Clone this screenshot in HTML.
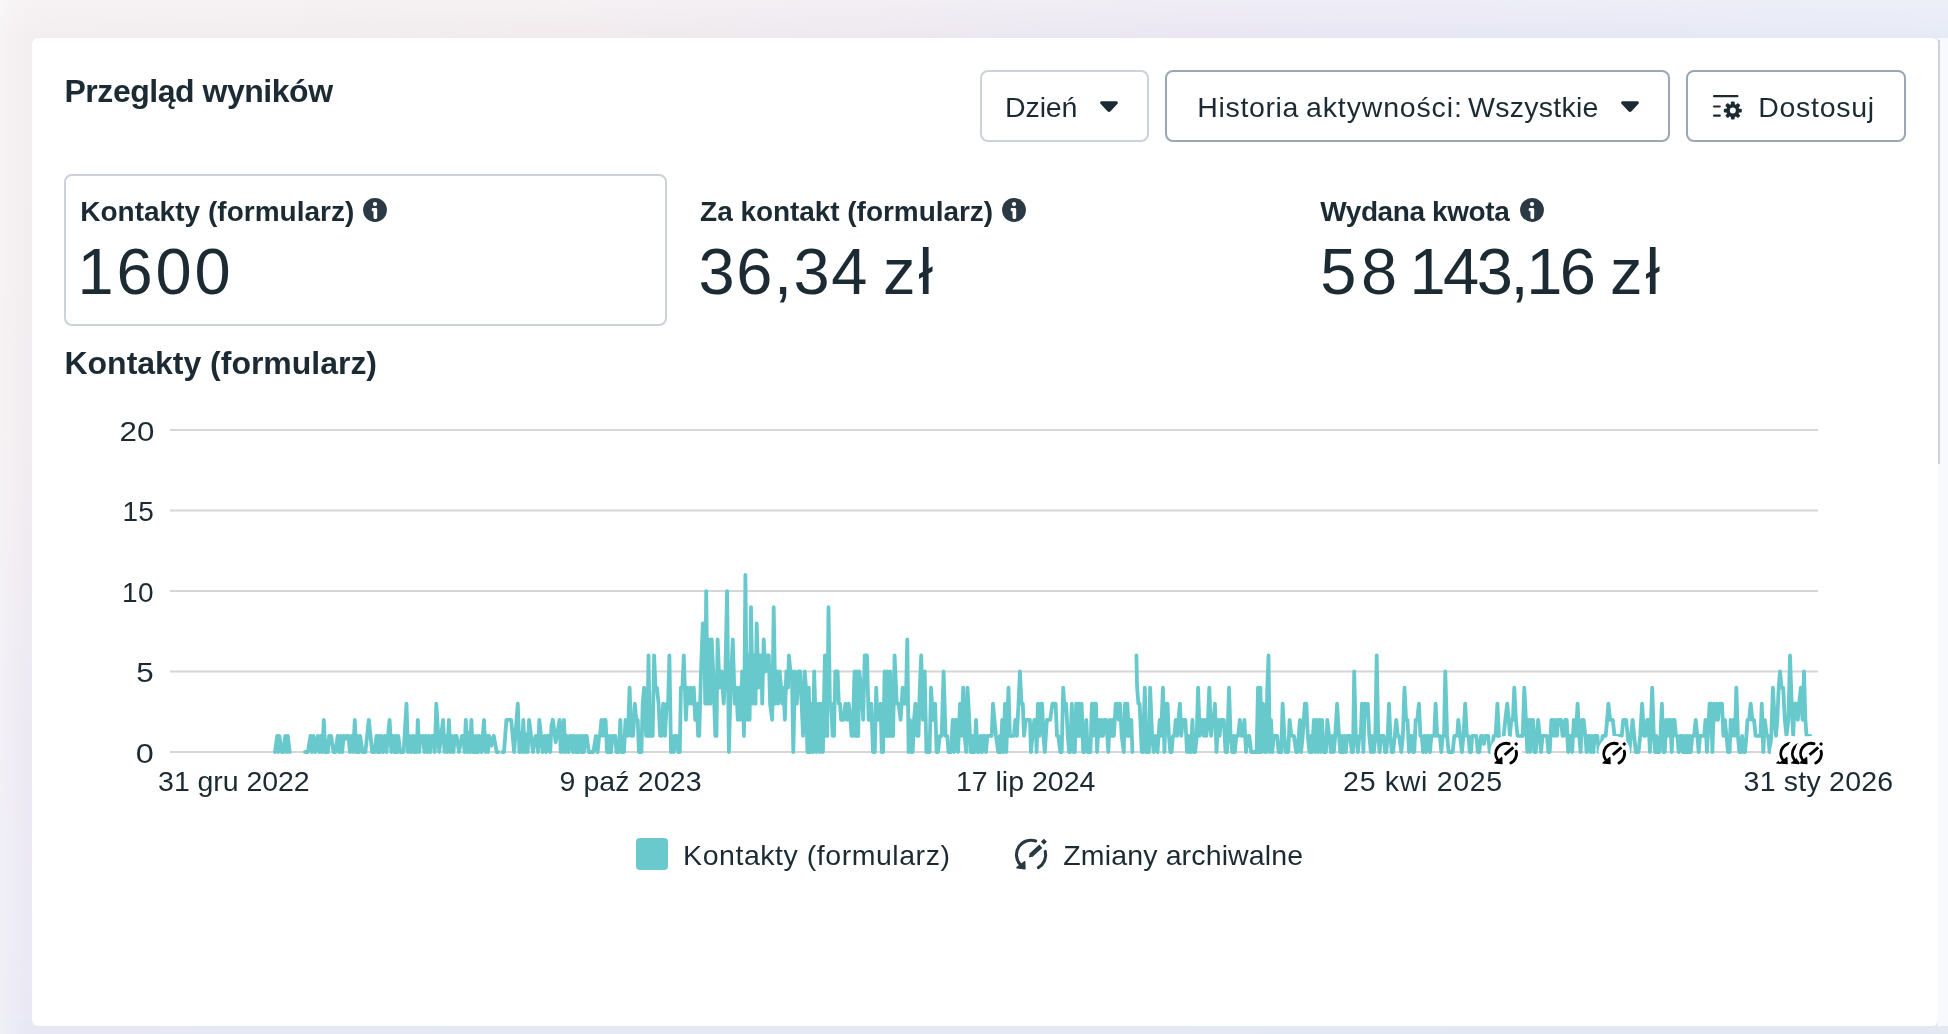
<!DOCTYPE html>
<html lang="pl">
<head>
<meta charset="utf-8">
<title>Przegląd wyników</title>
<style>
html,body{margin:0;padding:0;}
body{width:1948px;height:1034px;overflow:hidden;position:relative;
  font-family:"Liberation Sans",sans-serif;color:#1c2b33;background:#ece9f3;}
#bgtop{position:absolute;left:0;top:0;width:1948px;height:40px;
  background:linear-gradient(to bottom, rgba(255,255,255,0.28) 0, rgba(255,255,255,0) 38px),
    linear-gradient(to right, #f3eeef 0%, #f1ebee 30%, #ede8f0 48%, #e9e6f3 64%, #e7e7f5 82%, #e6eaf6 100%);}
#bgleft{position:absolute;left:0;top:38px;width:34px;height:996px;
  background:linear-gradient(to bottom, #f3eeef 0%, #f2edf0 40%, #ede9f3 68%, #e9e8f5 100%);}
#bgbot{position:absolute;left:0;top:1020px;width:1948px;height:14px;
  background:linear-gradient(to right, #e7e8f4 0%, #e5e9f3 30%, #e2e9f3 100%);}
#bgl2{position:absolute;left:0;top:0;width:30px;height:1034px;background:linear-gradient(to right, rgba(255,255,255,0.32) 0, rgba(255,255,255,0) 28px);}
.abs{position:absolute;white-space:nowrap;line-height:1;}
#card{position:absolute;left:32px;top:38px;width:1906px;height:988px;background:#fff;border-radius:6px;}
#rail{position:absolute;left:1938px;top:38px;width:10px;height:988px;background:#f8f9fd;}
#thumb{position:absolute;left:1938px;top:40px;width:2px;height:424px;background:#ced1dd;}
.btn{position:absolute;box-sizing:border-box;border:2px solid #cbd2d9;border-radius:8px;background:#fff;}
.b{font-weight:bold;}
#wrap{position:absolute;left:0;top:0;width:1948px;height:1034px;will-change:transform;}
</style>
</head>
<body>
<div id="wrap">
<div id="bgtop"></div><div id="bgleft"></div><div id="bgbot"></div><div id="bgl2"></div>
<div id="card"></div>
<div id="rail"></div><div id="thumb"></div>

<div class="abs b" style="left:64.5px;top:75px;font-size:32px;letter-spacing:-0.47px;">Przegląd wyników</div>

<div class="btn" style="left:980px;top:70px;width:169px;height:72px;"></div>
<div class="abs" style="left:1005.0px;top:93px;font-size:28.5px;letter-spacing:-0.1px;">Dzień</div>
<svg class="abs" style="left:1099px;top:100px;" width="20" height="14" viewBox="0 0 20 14"><path d="M2.6 1.2h14.8c1.3 0 2 1.5 1.1 2.5l-7 7.6c-.8.9-2.2.9-3 0l-7-7.6c-.9-1-.2-2.500 1.100-2.500z" fill="#1c2b33"/></svg>

<div class="btn" style="left:1165px;top:70px;width:505px;height:72px;border-color:#9aa7b5;"></div>
<div class="abs" style="left:0;top:93px;font-size:28.5px;"><span class="abs" style="left:1197.3px;top:0;letter-spacing:0.65px;">Historia</span> <span class="abs" style="left:1306.1px;top:0;letter-spacing:0.84px;">aktywności:</span> <span class="abs" style="left:1468.0px;top:0;letter-spacing:0.27px;">Wszystkie</span></div>
<svg class="abs" style="left:1620px;top:100px;" width="20" height="14" viewBox="0 0 20 14"><path d="M2.6 1.2h14.8c1.3 0 2 1.5 1.1 2.5l-7 7.6c-.8.9-2.2.9-3 0l-7-7.6c-.9-1-.2-2.500 1.100-2.500z" fill="#1c2b33"/></svg>

<div class="btn" style="left:1686px;top:70px;width:220px;height:72px;border-color:#9aa7b5;"></div>
<svg class="abs" style="left:1710px;top:92px;" width="36" height="36" viewBox="0 0 36 36">
<g fill="#1c2b33">
<rect x="3" y="3" width="25.500" height="2.200" rx="1"/>
<rect x="3" y="13.400" width="7.800" height="2.200" rx="1"/>
<rect x="3" y="22.600" width="7.800" height="2.200" rx="1"/>
</g>
<g transform="translate(22.800 18.600)">
<g fill="#1c2b33">
<rect x="-1.900" y="-9" width="3.800" height="18" rx="1"/>
<rect x="-1.900" y="-9" width="3.800" height="18" rx="1" transform="rotate(45)"/>
<rect x="-1.900" y="-9" width="3.800" height="18" rx="1" transform="rotate(90)"/>
<rect x="-1.900" y="-9" width="3.800" height="18" rx="1" transform="rotate(135)"/>
<circle r="6.600"/>
</g>
<circle r="3" fill="#fff"/>
</g>
</svg>
<div class="abs" style="left:1758.2px;top:93px;font-size:28.5px;letter-spacing:0.72px;">Dostosuj</div>

<div class="btn" style="left:64px;top:174px;width:603px;height:152px;"></div>
<div class="abs b" style="left:80.2px;top:198px;font-size:28px;letter-spacing:0.02px;">Kontakty (formularz)</div>
<svg class="abs" style="left:363.1px;top:198.1px;" width="24" height="24" viewBox="0 0 24 24"><circle cx="12" cy="12" r="11.900" fill="#2a3944"/><circle cx="12" cy="6.100" r="2.150" fill="#fff"/><rect x="10.500" y="10.100" width="3.700" height="10.800" rx="1.300" fill="#fff"/><rect x="8.700" y="10.100" width="4" height="3.100" rx="1.200" fill="#fff"/></svg>
<div class="abs" style="left:77.6px;top:239px;font-size:65px;letter-spacing:2.8px;">1600</div>
<div class="abs b" style="left:700.1px;top:198px;font-size:28px;letter-spacing:-0.05px;">Za kontakt (formularz)</div>
<svg class="abs" style="left:1002px;top:198px;" width="24" height="24" viewBox="0 0 24 24"><circle cx="12" cy="12" r="11.900" fill="#2a3944"/><circle cx="12" cy="6.100" r="2.150" fill="#fff"/><rect x="10.500" y="10.100" width="3.700" height="10.800" rx="1.300" fill="#fff"/><rect x="8.700" y="10.100" width="4" height="3.100" rx="1.200" fill="#fff"/></svg>
<div class="abs" style="left:0;top:239px;font-size:65px;"><span class="abs" style="left:698.5px;top:0;letter-spacing:1.56px;">36,34</span> <span class="abs" style="left:882.9px;top:0;letter-spacing:3.2px;">zł</span></div>
<div class="abs b" style="left:1320.2px;top:198px;font-size:28px;letter-spacing:-0.4px;">Wydana kwota</div>
<svg class="abs" style="left:1519.8px;top:198px;" width="24" height="24" viewBox="0 0 24 24"><circle cx="12" cy="12" r="11.900" fill="#2a3944"/><circle cx="12" cy="6.100" r="2.150" fill="#fff"/><rect x="10.500" y="10.100" width="3.700" height="10.800" rx="1.300" fill="#fff"/><rect x="8.700" y="10.100" width="4" height="3.100" rx="1.200" fill="#fff"/></svg>
<div class="abs" style="left:0;top:239px;font-size:65px;"><span class="abs" style="left:1320.3px;top:0;letter-spacing:4.6px;">58</span> <span class="abs" style="left:1409.4px;top:0;letter-spacing:-2.44px;">143,16</span> <span class="abs" style="left:1610.1px;top:0;letter-spacing:2.8px;">zł</span></div>

<div class="abs b" style="left:64.5px;top:347px;font-size:32px;letter-spacing:-0.02px;">Kontakty (formularz)</div>

<svg id="chart" class="abs" style="left:0;top:400px;" width="1948" height="380" viewBox="0 400 1948 380">
<g stroke="#d6d6d6" stroke-width="2">
<line x1="170" x2="1818" y1="430" y2="430"/>
<line x1="170" x2="1818" y1="510.500" y2="510.500"/>
<line x1="170" x2="1818" y1="591" y2="591"/>
<line x1="170" x2="1818" y1="671.400" y2="671.400"/>
<line x1="170" x2="1818" y1="752" y2="752"/>
</g>
<g fill="none" stroke="#68c9cc" stroke-width="3.8" stroke-linejoin="round" stroke-linecap="round">
<path d="M275 752 L277.2 735.9 L278.3 752 L279.3 735.9 L281.8 752 L283.2 752 L285.3 735.9 L286.5 752 L287.8 735.9 L289.7 752"/>
<path d="M305 752 L307.9 752 L310.5 735.9 L311.9 752 L313.4 735.9 L315.3 752 L317.8 735.9 L319.4 752 L320.9 735.9 L322.4 752 L323.8 719.8 L325.3 752 L326.7 740.7 L327.9 752 L329.1 735.9 L331.1 735.9 L333.5 752 L335.4 752 L337.7 735.9 L339.2 752 L340.7 735.9 L342.2 752 L343.7 735.9 L345.1 739.1 L346.6 735.9 L348.5 735.9 L349.9 752 L351.9 735.9 L353.3 752 L354.8 719.8 L356.2 752 L357.7 735.9 L358.9 752 L360.1 735.9 L362.5 752 L365.4 752 L368.8 719.8 L372.2 752 L374.6 752 L376.5 735.9 L377.7 752 L379 735.9 L380.1 752 L381.4 735.9 L383.1 752 L384.8 735.9 L386.5 752 L389.6 719.8 L391.3 752 L393 735.9 L394.3 752 L395.6 735.9 L397 752 L398.3 735.9 L400.2 752 L403.6 752 L406.5 703.7 L408 752 L409.4 735.9 L411 752 L412.6 735.9 L414.1 752 L415.7 735.9 L416.8 752 L417.8 719.8 L419.2 752 L420.5 735.9 L421.5 739.1 L423 735.9 L424.4 752 L425.9 735.9 L427.3 752 L428.8 735.9 L430.2 752 L431.7 735.9 L433.1 735.9 L433.4 735.9 L434.8 752 L436.3 703.7 L439.2 752 L443.1 719.8 L444.5 752 L446 735.9 L447.4 752 L448.9 719.8 L450.3 752 L451.8 735.9 L453.4 752 L455 735.9 L456.6 735.9 L459 752 L461.9 735.9 L463.4 735.9 L464.6 752 L465.8 719.8 L467.2 752 L468.7 732.7 L470 752 L471.4 719.8 L472.7 752 L474 735.9 L475.3 752 L476.7 735.9 L478 752 L479.3 735.9 L481.5 752 L484 719.8 L485.5 752 L487.1 735.9 L488.1 752 L489.2 735.9 L491.4 745.6 L493.8 735.9 L496.7 752 L498.2 752"/>
<path d="M502.5 752 L504 752 L506.4 719.8 L511.2 719.8 L514.1 752 L517.8 703.7 L519.4 752 L520.9 732.7 L522.1 752 L523.3 719.8 L524.8 752 L526.2 734.3 L527.7 752 L529.1 719.8 L533 752 L535.6 735.9 L536.9 735.9 L538.1 752 L539.3 719.8 L542.7 752 L544.6 735.9 L546.1 752 L547.5 735.9 L549 735.9 L550.2 752 L551.5 725.2 L552.8 719.8 L555.7 742.3 L559.6 719.8 L560.7 752 L561.8 723 L562.9 752 L563.9 719.8 L565.4 752 L566.8 735.9 L568.5 752 L570.1 735.9 L571.7 735.9 L572.9 752 L574.3 735.9 L575.7 752 L577 735.9 L578.4 752 L579.8 735.9 L581.2 752 L582.5 735.9 L583.9 752 L585.3 735.9 L586.7 735.9 L588.8 752 L593.4 752 L595.9 735.9 L597.6 752 L599.2 735.9 L600 735.9 L601.4 719.8 L602.8 735.9 L604.2 719.8 L605.6 719.8 L607 752 L608.4 752 L609.7 735.9 L611.1 752 L612.5 735.9 L613.9 735.9 L615.3 735.9 L616.5 752 L617.6 752 L619 752 L620.3 719.8 L621.5 752 L622.6 752 L624 752 L625.5 719.8 L626.7 735.9 L627.9 735.9 L629.6 687.6 L631.3 735.9 L633.1 735.9 L634.8 703.7 L636.3 719.8 L637.7 719.8 L638.9 752 L640 752 L641.4 752 L642.7 703.7 L644.1 687.6 L646.1 735.9 L647.3 735.9 L648.5 655.5 L649.9 735.9 L651.3 735.9 L652.7 735.9 L654.1 655.5 L655.5 687.6 L656.9 687.6 L658.6 703.7 L660.1 735.9 L661.5 735.9 L663.2 703.7 L665 735.9 L666.7 703.7 L668.1 703.7 L669.4 655.5 L671 752 L672.5 735.9 L673.9 752 L675.4 735.9 L676.8 735.9 L678.3 752 L679.8 752 L680.9 687.6 L682.4 687.6 L683.8 655.5 L685.9 719.8 L687.3 687.6 L688.9 703.7 L690.5 687.6 L692.1 703.7 L693.8 687.6 L695.2 719.8 L696.9 703.7 L698.1 735.9 L699.2 735.9 L701 671.5 L702.8 623.3 L704.2 623.3 L705.2 703.7 L706.2 591.1 L707.6 703.7 L709.1 639.4 L710.4 703.7 L711.7 639.4 L713.2 671.5 L715.3 735.9 L716.5 735.9 L717.6 639.4 L719.6 687.6 L721.6 671.5 L723.7 703.7 L725.4 671.5 L727.1 591.1 L728.9 752 L730.6 687.6 L732.8 639.4 L734.7 703.7 L736.4 687.6 L737.8 719.8 L739.3 687.6 L740.7 719.8 L742.2 671.5 L744 735.9 L745.4 575 L746.9 719.8 L748.3 655.5 L749.6 719.8 L751 607.2 L752.7 703.7 L754.1 655.5 L755.5 703.7 L756.7 623.3 L758.5 687.6 L760 655.5 L761.5 655.5 L762.2 703.7 L763.7 639.4 L765.4 671.5 L766.9 655.5 L768.8 655.5 L770.1 703.7 L772.2 719.8 L773.7 607.2 L775.3 703.7 L776.8 671.5 L778.2 703.7 L779.6 671.5 L781.1 687.6 L782.3 703.7 L783.4 687.6 L784.9 719.8 L786.3 671.5 L788.1 687.6 L788.9 655.5 L790.4 671.5 L791.9 671.5 L793.3 752 L795 671.5 L796.8 703.7 L798.5 671.5 L800.2 671.5 L801.6 703.7 L803.1 735.9 L804.7 671.5 L806 687.6 L807.4 752 L808.8 687.6 L810.2 752 L811.6 703.7 L813 752 L814.2 671.5 L816.4 752 L818.5 703.7 L819.9 752 L821.4 703.7 L822.9 752 L824.9 655.5 L826 735.9 L827.2 735.9 L828.5 607.2 L829.9 703.7 L831.2 703.7 L832.6 735.9 L834 735.9 L835.3 671.5 L837.6 671.5 L838.8 703.7 L840 703.7 L841.1 719.8 L843.4 719.8 L845.4 703.7 L846.9 719.8 L848.7 703.7 L850.4 719.8 L851.6 735.9 L852.7 735.9 L854.5 671.5 L855.6 735.9 L857 671.5 L858.2 735.9 L859.3 671.5 L861.2 687.6 L863.2 719.8 L864.7 655.5 L867 655.5 L868.6 719.8 L869.9 719.8 L871.3 703.7 L873 752 L874.8 752 L876.2 687.6 L877.4 719.8 L878.6 719.8 L880.6 703.7 L881.8 752 L883.1 752 L884.6 671.5 L886 735.9 L887.4 671.5 L888.8 735.9 L890.2 671.5 L891.6 735.9 L893.1 735.9 L894.6 655.5 L896.8 703.7 L898.6 703.7 L900.6 719.8 L902.6 687.6 L904.4 703.7 L905.8 703.7 L907.3 639.4 L908.6 752 L910 719.8 L911.3 752 L912.7 752 L914 719.8 L915.4 703.7 L917.1 735.9 L918.5 735.9 L919.8 687.6 L921.2 655.5 L922.9 719.8 L924.7 671.5 L926.4 752 L928.1 752 L929.6 752 L931 687.6 L933.1 719.8 L935.1 703.7 L936.6 752 L938 752 L939.8 735.9 L941.7 735.9 L943.6 671.5 L945.6 735.9 L947.3 735.9 L948.5 752 L949.6 752 L951.2 752 L952.7 719.8 L954.1 752 L955.4 719.8 L956.7 719.8 L958.1 752 L960 703.7 L961.4 735.9 L963.2 687.6 L964.6 735.9 L966.2 752 L967.5 687.6 L969.3 719.8 L970.6 752 L972.2 735.9 L973.3 752 L974.7 752 L976 719.8 L977.6 752 L979 752 L980.5 735.9 L982 752 L983.4 735.9 L984.7 735.9 L986 752 L987.4 735.9 L988.8 735.9 L990.1 735.9 L991.7 735.9 L993 703.7 L994.4 719.8 L996 735.9 L998.2 752 L999.8 735.9 L1000.9 752 L1002.2 719.8 L1003.6 752 L1005 703.7 L1006.3 752 L1008.5 687.6 L1009.9 735.9 L1011.2 735.9 L1012.3 735.9 L1013.9 735.9 L1015.3 719.8 L1016.9 735.9 L1018.5 703.7 L1019.9 671.5 L1021.5 703.7 L1022.8 703.7 L1024 735.9 L1025.8 719.8 L1027.1 719.8 L1028.5 719.8 L1029.9 719.8 L1031 752 L1032.5 735.9 L1034.3 719.8 L1035.6 719.8 L1036.6 752 L1037.9 703.7 L1039.4 735.9 L1040.8 703.7 L1042.1 703.7 L1043.4 735.9 L1044.8 752 L1046.9 719.8 L1048.6 719.8 L1050.2 719.8 L1052.4 703.7 L1054 703.7 L1055.6 703.7 L1057 735.9 L1058.3 735.9 L1060.3 752 L1061.7 752 L1063.2 687.6 L1064.6 710.2 L1066.1 703.7 L1067.8 735.9 L1069.1 752 L1070.2 752 L1071.8 703.7 L1073.5 752 L1074.8 752 L1076.2 703.7 L1077.6 735.9 L1078.9 703.7 L1080.2 735.9 L1081.6 703.7 L1083.2 752 L1084.5 752 L1086.3 719.8 L1087.6 752 L1089 752 L1090.4 752 L1091.9 703.7 L1093.2 735.9 L1094.6 703.7 L1096 703.7 L1097.1 752 L1098.9 719.8 L1100.3 735.9 L1101.6 719.8 L1103 735.9 L1104.4 719.8 L1106 719.8 L1107.3 735.9 L1108.3 752 L1109.8 719.8 L1111.2 735.9 L1112.5 719.8 L1113.9 735.9 L1115.7 703.7 L1117.3 703.7 L1118.7 719.8 L1120 703.7 L1121.7 735.9 L1123.8 752 L1125 703.7 L1126.3 735.9 L1127.4 703.7 L1128.8 735.9 L1129.9 719.8 L1131.3 719.8 L1132.4 752"/>
<path d="M1136.4 655.5 L1137.1 687.6 L1138.4 703.7 L1139.6 703.7 L1141.8 752 L1142.9 752 L1144.8 687.6 L1146.3 752 L1147.7 752 L1148.9 752 L1150.1 687.6 L1152.1 735.9 L1153.7 752 L1155.3 735.9 L1157.5 752 L1159.7 719.8 L1161.1 735.9 L1162.9 687.6 L1164.4 752 L1165.9 703.7 L1167.5 703.7 L1168.9 735.9 L1170.3 752 L1171.6 752 L1172.9 735.9 L1174.3 735.9 L1175.7 719.8 L1177.2 735.9 L1178.4 719.8 L1179.9 703.7 L1181.3 735.9 L1182.7 719.8 L1184.1 719.8 L1185.4 719.8 L1187 752 L1188.4 735.9 L1189.8 752 L1191.1 752 L1192.4 719.8 L1193.8 752 L1195.2 752 L1196.7 735.9 L1198.1 687.6 L1199.7 735.9 L1201.1 719.8 L1202.5 719.8 L1203.8 735.9 L1205.1 719.8 L1206.4 735.9 L1208 719.8 L1209.3 687.6 L1211.1 735.9 L1212.5 719.8 L1213.7 719.8 L1214.9 703.7 L1216.5 752 L1218.1 719.8 L1219.6 735.9 L1221 719.8 L1222.5 719.8 L1223.8 719.8 L1225.5 752 L1227 752 L1229 687.6 L1230.6 735.9 L1232.2 752 L1233.6 735.9 L1234.9 752 L1236.3 735.9 L1238.2 735.9 L1239.8 719.8 L1241.4 735.9 L1242.8 735.9 L1244.4 719.8 L1246 752 L1247.9 735.9 L1249.3 735.9 L1251.2 752 L1256.6 752 L1258 687.6 L1259.2 752 L1260.4 687.6 L1261.7 752 L1263.1 703.7 L1264.9 752 L1266.1 752 L1267.3 687.6 L1268.5 655.5 L1269.8 752 L1271 719.8 L1272.3 752 L1273.9 735.9 L1275.5 735.9 L1277.2 735.9 L1278.6 752 L1280.1 752 L1281.3 752 L1282.6 703.7 L1284.4 735.9 L1285.7 752 L1286.9 752 L1288.3 752 L1289.6 719.8 L1291.3 735.9 L1292.7 735.9 L1294 735.9 L1296.1 752 L1297.4 752 L1298.7 735.9 L1300 719.8 L1301.1 752 L1302.7 735.9 L1304.9 703.7 L1306.3 703.7 L1307.8 735.9 L1309.5 752 L1310.8 735.9 L1312.1 752 L1313.9 719.8 L1315.2 752 L1316.5 719.8 L1317.9 752 L1319.2 719.8 L1320.6 752 L1322 719.8 L1323.4 752 L1324.5 752 L1325.9 752 L1327.3 719.8 L1329.2 735.9 L1330.9 752 L1332.3 735.9 L1333.8 752 L1335.2 735.9 L1337.1 703.7 L1339 735.9 L1340.3 752 L1341.7 735.9 L1343 752 L1344.4 735.9 L1345.8 752 L1347.2 735.9 L1348.7 735.9 L1350.1 735.9 L1351.8 752 L1353 752 L1354.2 671.5 L1355.8 735.9 L1357.9 752 L1359.4 735.9 L1360.7 735.9 L1362 703.7 L1363.4 752 L1364.8 703.7 L1366.1 706.9 L1367.7 703.7 L1369.3 735.9 L1370.9 752 L1372.3 735.9 L1373.9 752 L1375.3 735.9 L1376.7 655.5 L1378.2 735.9 L1379.6 752 L1381 735.9 L1382.3 735.9 L1383.7 735.9 L1385 752 L1386.3 752 L1387.7 735.9 L1389 703.7 L1390.4 735.9 L1391.8 752 L1393.1 752 L1394.8 735.9 L1396.2 719.8 L1397.8 735.9 L1399.1 735.9 L1401.3 752 L1402.9 735.9 L1404.5 687.6 L1406.1 719.8 L1407.5 719.8 L1409 752 L1410.5 735.9 L1411.9 735.9 L1413.1 752 L1414.3 752 L1415.7 719.8 L1417.3 719.8 L1418.9 703.7 L1420.4 735.9 L1421.8 735.9 L1423.1 752 L1424.6 735.9 L1426 752 L1427.3 735.9 L1428.7 735.9 L1430 752 L1431.4 735.9 L1432.8 735.9 L1434.3 735.9 L1435.6 703.7 L1437.1 735.9 L1438.6 735.9 L1439.9 735.9 L1441.3 752 L1442.7 735.9 L1444 735.9 L1445.3 671.5 L1447.1 735.9 L1448.6 752 L1450 752 L1452.7 752 L1454.3 735.9 L1456 735.9 L1457.2 735.9 L1458.3 719.8 L1460 735.9 L1461.9 752 L1463.5 735.9 L1465.2 703.7 L1466.8 735.9 L1468.4 735.9 L1469.8 752 L1471 752 L1472.2 735.9 L1474.4 735.9 L1475 735.9 L1476.3 735.9 L1477.9 752 L1479.3 752 L1481 735.9 L1482.4 735.9 L1483.9 744 L1485.3 735.9 L1486.7 735.9 L1488.2 735.9 L1489.7 752 L1492.3 752 L1493.6 735.9 L1495.6 735.9 L1497.4 703.7 L1499 735.9 L1500.5 752 L1502.1 752 L1503.7 735.9 L1505.3 719.8 L1507.2 703.7 L1508.8 719.8 L1509.9 735.9 L1511.3 719.8 L1512.9 719.8 L1514.3 687.6 L1515.9 719.8 L1517.5 735.9 L1518.9 735.9 L1520.5 735.9 L1522.7 735.9 L1524.3 687.6 L1525.9 719.8 L1527.3 752 L1528.8 719.8 L1530.2 752 L1531.6 719.8 L1533.1 719.8 L1534.4 752 L1535.7 752 L1537 735.9 L1538.1 719.8 L1539.7 735.9 L1541.1 752 L1542.5 735.9 L1545.4 735.9 L1547 735.9 L1548.4 752 L1549.7 752 L1551.4 719.8 L1552.8 719.8 L1554.1 735.9 L1555.5 719.8 L1556.9 735.9 L1558.2 719.8 L1559.7 719.8 L1561.1 719.8 L1562.5 735.9 L1563.8 735.9 L1565.2 719.8 L1566.7 719.8 L1568.1 752 L1569.4 735.9 L1570.9 735.9 L1572.2 752 L1573.8 719.8 L1575.7 735.9 L1577.6 703.7 L1579.2 735.9 L1580.6 752 L1582 719.8 L1583.6 719.8 L1585.3 735.9 L1586.6 752 L1587.9 735.9 L1589.3 735.9 L1590.6 752 L1592 735.9 L1593.4 752 L1594.7 735.9 L1596.1 735.9 L1597.4 735.9 L1598.8 752 L1600.6 752 L1602.6 735.9 L1604.4 735.9 L1605.7 735.9 L1607.1 719.8 L1608.4 703.7 L1610.1 719.8 L1611.5 719.8 L1612.8 719.8 L1614.5 735.9 L1615.8 735.9 L1617.4 735.9 L1619 735.9 L1620.5 735.9 L1621.8 735.9 L1623.2 719.8 L1624.7 719.8 L1626.1 719.8 L1627.7 735.9 L1629.3 752 L1631 735.9 L1632.6 719.8 L1634.2 735.9 L1635.8 752 L1638.5 752 L1640.2 735.9 L1642.1 703.7 L1644 735.9 L1645.6 735.9 L1647.2 719.8 L1648.6 719.8 L1649.9 752 L1652.2 687.6 L1653.8 735.9 L1655.2 752 L1656.5 735.9 L1657.8 752 L1659.2 752 L1660.5 735.9 L1661.9 703.7 L1663.5 752 L1664.8 752 L1666.2 719.8 L1667.7 735.9 L1669.1 719.8 L1670.4 719.8 L1671.7 752 L1673.1 719.8 L1674.5 719.8 L1676 735.9 L1677.3 735.9 L1678.7 752 L1680.1 735.9 L1681.4 735.9 L1682.8 752 L1684.1 735.9 L1685.5 752 L1686.8 735.9 L1688.2 752 L1689.6 735.9 L1690.9 752 L1692.2 735.9 L1694.1 735.9 L1695.7 719.8 L1697.3 735.9 L1698.7 752 L1700 735.9 L1701.4 735.9 L1702.9 735.9 L1704.2 735.9 L1705.5 719.8 L1706.9 752 L1708.3 727.9 L1709.6 703.7 L1711 703.7 L1712.4 752 L1713.8 703.7 L1715.2 719.8 L1716.6 703.7 L1718 719.8 L1719.3 703.7 L1720.7 703.7 L1722 703.7 L1723.4 735.9 L1724.9 719.8 L1726.4 735.9 L1728 752 L1729.6 752 L1730.7 719.8 L1732.1 735.9 L1733.4 719.8 L1735 735.9 L1736.3 687.6 L1737.9 735.9 L1739.4 752 L1740.8 752 L1742.1 735.9 L1743.5 752 L1745 752 L1746.4 735.9 L1747.5 719.8 L1749.1 719.8 L1750.7 703.7 L1752.4 719.8 L1754 719.8 L1755.6 735.9 L1757.2 735.9 L1758.8 735.9 L1760.5 735.9 L1761.8 703.7 L1763.3 752 L1764.8 719.8 L1766.8 735.9 L1768.1 735.9 L1769.7 752 L1771.3 735.9 L1772.9 687.6 L1774.6 719.8 L1776 735.9 L1777.3 719.8 L1778.7 687.6 L1780 671.5 L1781.6 687.6 L1783.2 687.6 L1784.8 719.8 L1786.5 735.9 L1788.4 719.8 L1790 655.5 L1791.7 703.7 L1793.2 735.9 L1794.6 703.7 L1796.2 703.7 L1797.8 719.8 L1799.2 703.7 L1800.8 687.6 L1802.5 719.8 L1804 671.5 L1805.4 719.8 L1806.5 735.9 L1810.3 735.9"/>
</g>
<g transform="translate(1506.1 753.7)"><circle r="15.700" cy="-2" fill="#fff"/><g transform="translate(0 0)"><g fill="none" stroke="#000" stroke-width="2.900" stroke-linecap="round" stroke-linejoin="round"><path d="M3.040 -9.950A10.400 10.400 0 0 0 -8.480 6.020"/><path d="M10.110 -2.430A10.400 10.400 0 0 1 4.750 9.250"/></g><path d="M-11.200 9.300L-4.300 3.800L-4.100 10z" fill="#000" stroke="#000" stroke-width="1.200" stroke-linejoin="round"/><path d="M-1.450 1.200L7.250 -6.300" fill="none" stroke="#000" stroke-width="2.900"/><path d="M10.050 -11.700l2 2-2 2-2-2z" fill="#000"/></g></g>
<g transform="translate(1614.2 753.7)"><circle r="15.700" cy="-2" fill="#fff"/><g transform="translate(0 0)"><g fill="none" stroke="#000" stroke-width="2.900" stroke-linecap="round" stroke-linejoin="round"><path d="M3.040 -9.950A10.400 10.400 0 0 0 -8.480 6.020"/><path d="M10.110 -2.430A10.400 10.400 0 0 1 4.750 9.250"/></g><path d="M-11.200 9.300L-4.300 3.800L-4.100 10z" fill="#000" stroke="#000" stroke-width="1.200" stroke-linejoin="round"/><path d="M-1.450 1.200L7.250 -6.300" fill="none" stroke="#000" stroke-width="2.900"/><path d="M10.050 -11.700l2 2-2 2-2-2z" fill="#000"/></g></g>
<g transform="translate(1786.6 753.7)"><circle r="15.700" cy="-2" fill="#fff"/><g transform="translate(1.4 0)"><g fill="none" stroke="#000" stroke-width="2.900" stroke-linecap="round" stroke-linejoin="round"><path d="M3.040 -9.950A10.400 10.400 0 0 0 -8.480 6.020"/><path d="M10.110 -2.430A10.400 10.400 0 0 1 4.750 9.250"/></g><path d="M-11.200 9.300L-4.300 3.800L-4.100 10z" fill="#000" stroke="#000" stroke-width="1.200" stroke-linejoin="round"/><path d="M-1.450 1.200L7.250 -6.300" fill="none" stroke="#000" stroke-width="2.900"/><path d="M10.050 -11.700l2 2-2 2-2-2z" fill="#000"/></g></g>
<g transform="translate(1791.2 753.7)"><circle r="15.700" cy="-2" fill="#fff"/><g transform="translate(0 0)"><g fill="none" stroke="#000" stroke-width="2.900" stroke-linecap="round" stroke-linejoin="round"><path d="M3.040 -9.950A10.400 10.400 0 0 0 -8.480 6.020"/><path d="M10.110 -2.430A10.400 10.400 0 0 1 4.750 9.250"/></g><path d="M-11.200 9.300L-4.300 3.800L-4.100 10z" fill="#000" stroke="#000" stroke-width="1.200" stroke-linejoin="round"/><path d="M-1.450 1.200L7.250 -6.300" fill="none" stroke="#000" stroke-width="2.900"/><path d="M10.050 -11.700l2 2-2 2-2-2z" fill="#000"/></g></g>
<g transform="translate(1802.8 753.7)"><circle r="15.700" cy="-2" fill="#fff"/><g transform="translate(0 0)"><g fill="none" stroke="#000" stroke-width="2.900" stroke-linecap="round" stroke-linejoin="round"><path d="M3.040 -9.950A10.400 10.400 0 0 0 -8.480 6.020"/><path d="M10.110 -2.430A10.400 10.400 0 0 1 4.750 9.250"/></g><path d="M-11.200 9.300L-4.300 3.800L-4.100 10z" fill="#000" stroke="#000" stroke-width="1.200" stroke-linejoin="round"/><path d="M-1.450 1.200L7.250 -6.300" fill="none" stroke="#000" stroke-width="2.900"/><path d="M10.050 -11.700l2 2-2 2-2-2z" fill="#000"/></g></g>
<g transform="translate(1811 753.7)"><circle r="15.700" cy="-2" fill="#fff"/><g transform="translate(0 0)"><g fill="none" stroke="#000" stroke-width="2.900" stroke-linecap="round" stroke-linejoin="round"><path d="M3.040 -9.950A10.400 10.400 0 0 0 -8.480 6.020"/><path d="M10.110 -2.430A10.400 10.400 0 0 1 4.750 9.250"/></g><path d="M-11.200 9.300L-4.300 3.800L-4.100 10z" fill="#000" stroke="#000" stroke-width="1.200" stroke-linejoin="round"/><path d="M-1.450 1.200L7.250 -6.300" fill="none" stroke="#000" stroke-width="2.900"/><path d="M10.050 -11.700l2 2-2 2-2-2z" fill="#000"/></g></g>

</svg>
<div class="abs" style="left:122.7px;top:418px;font-size:28px;transform-origin:30px 50%;transform:scaleX(1.117);">20</div><div class="abs" style="left:122.6px;top:498px;font-size:28px;letter-spacing:0.2px;">15</div><div class="abs" style="left:122.0px;top:579px;font-size:28px;letter-spacing:0.4px;">10</div><div class="abs" style="left:137.7px;top:659px;font-size:28px;transform-origin:15px 50%;transform:scaleX(1.121);">5</div><div class="abs" style="left:137.7px;top:740px;font-size:28px;transform-origin:15px 50%;transform:scaleX(1.157);">0</div>
<div class="abs" style="left:158.1px;top:767px;font-size:28.5px;letter-spacing:-0.06px;">31 gru 2022</div><div class="abs" style="left:559.4px;top:767px;font-size:28.5px;letter-spacing:0.12px;">9 paź 2023</div><div class="abs" style="left:955.9px;top:767px;font-size:28.5px;">17 lip 2024</div><div class="abs" style="left:1343.1px;top:767px;font-size:28.5px;letter-spacing:0.7px;">25 kwi 2025</div><div class="abs" style="left:1743.6px;top:767px;font-size:28.5px;letter-spacing:0.22px;">31 sty 2026</div>

<div class="abs" style="left:636px;top:838px;width:32px;height:32px;border-radius:4px;background:#69c9cc;"></div>
<div class="abs" style="left:683.1px;top:841px;font-size:28.5px;letter-spacing:0.54px;">Kontakty (formularz)</div>
<svg class="abs" style="left:1011px;top:834px;" width="40" height="40" viewBox="-20 -20 40 40"><g transform="translate(0.070 0.900) scale(1.350)"><g fill="none" stroke="#283943" stroke-width="2.300" stroke-linecap="round" stroke-linejoin="round"><path d="M3.400 -10.300A10.800 10.800 0 0 0 -8.200 7"/><path d="M10.500 -2.600A10.800 10.800 0 0 1 5.400 9.400"/></g><path d="M-10.400 9.400L-4.800 5.100L-4.600 10.300z" fill="#283943" stroke="#283943" stroke-width="1.200" stroke-linejoin="round"/><path d="M-0.200 0.300L7.200 -6.400" fill="none" stroke="#283943" stroke-width="3.300"/><path d="M9.500 -12l2.200 2.200-2.200 2.200-2.200-2.200z" fill="#283943"/><path d="M-1.700 1.900l3-0.800-2.200-2.400z" fill="#283943"/></g></svg>
<div class="abs" style="left:1063.3px;top:841px;font-size:28.5px;letter-spacing:0.14px;">Zmiany archiwalne</div>

</div>
</body>
</html>
